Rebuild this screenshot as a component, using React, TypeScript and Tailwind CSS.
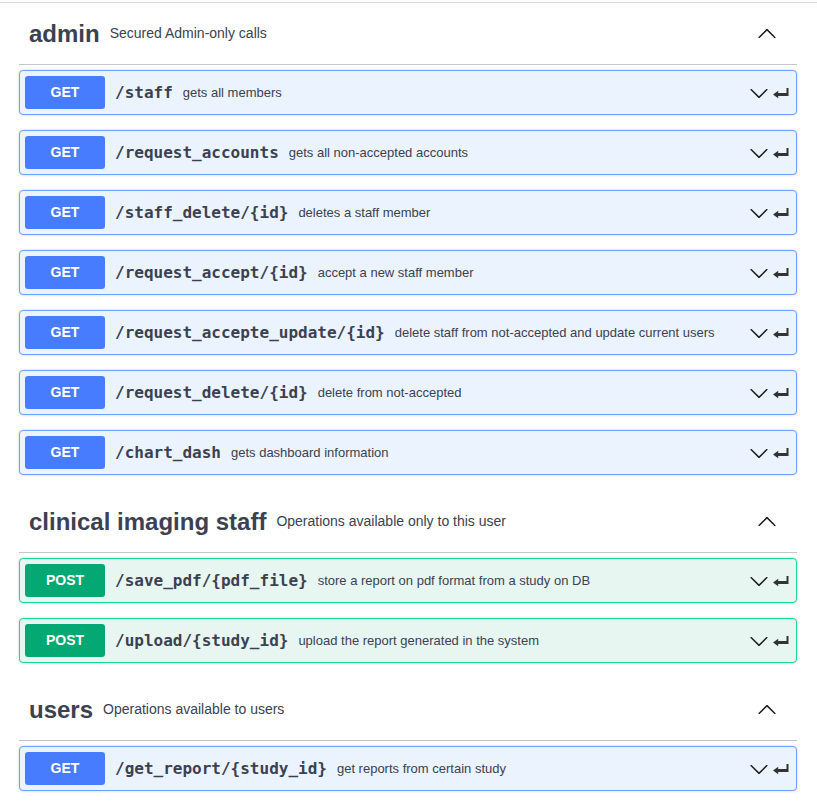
import React from 'react';

type Op = { method: 'GET' | 'POST'; path: string; summary: string };
type Tag = { name: string; description: string; ops: Op[] };

const TAGS: Tag[] = [
  {
    name: 'admin',
    description: 'Secured Admin-only calls',
    ops: [
      { method: 'GET', path: '/staff', summary: 'gets all members' },
      { method: 'GET', path: '/request_accounts', summary: 'gets all non-accepted accounts' },
      { method: 'GET', path: '/staff_delete/{id}', summary: 'deletes a staff member' },
      { method: 'GET', path: '/request_accept/{id}', summary: 'accept a new staff member' },
      {
        method: 'GET',
        path: '/request_accepte_update/{id}',
        summary: 'delete staff from not-accepted and update current users',
      },
      { method: 'GET', path: '/request_delete/{id}', summary: 'delete from not-accepted' },
      { method: 'GET', path: '/chart_dash', summary: 'gets dashboard information' },
    ],
  },
  {
    name: 'clinical imaging staff',
    description: 'Operations available only to this user',
    ops: [
      { method: 'POST', path: '/save_pdf/{pdf_file}', summary: 'store a report on pdf format from a study on DB' },
      { method: 'POST', path: '/upload/{study_id}', summary: 'upload the report generated in the system' },
    ],
  },
  {
    name: 'users',
    description: 'Operations available to users',
    ops: [{ method: 'GET', path: '/get_report/{study_id}', summary: 'get reports from certain study' }],
  },
];

const ARROW =
  'M17.418 6.109c.272-.268.709-.268.979 0s.271.701 0 .969l-7.908 7.83c-.27.268-.707.268-.979 0l-7.908-7.83c-.27-.268-.27-.701 0-.969.271-.268.709-.268.979 0L10 13.25l7.418-7.141z';

function Chevron({ up = false }: { up?: boolean }) {
  return (
    <svg
      viewBox="0 0 20 20"
      className={`h-[20px] w-[20px] shrink-0 ${up ? 'rotate-180' : ''}`}
      fill="#1b1b1b"
    >
      <path d={ARROW} />
    </svg>
  );
}

// return-style "jump to" arrow
function JumpTo() {
  return (
    <svg viewBox="0 0 20 20" className="h-[20px] w-[20px] shrink-0" fill="#333333">
      <path d="M15.5 5H17.5V13H7.2V15.3L2 11.5L7.2 7.7V10H15.5Z" />
    </svg>
  );
}

function OpRow({ op }: { op: Op }) {
  const get = op.method === 'GET';
  return (
    <div
      className={`mb-[15px] flex h-[45px] items-center rounded-[4px] border p-[5px] shadow-[0_0_3px_rgba(0,0,0,0.19)] ${
        get ? 'border-[#6fa0ff] bg-[#ebf3ff]' : 'border-[#14d894] bg-[#e8f6f1]'
      }`}
    >
      <span
        className={`flex h-[33px] w-[80px] shrink-0 items-center justify-center rounded-[3px] text-[14px] font-bold text-white ${
          get ? 'bg-[#477cff]' : 'bg-[#03a873]'
        }`}
      >
        {op.method}
      </span>
      <span className="px-[10px] font-['DejaVu_Sans_Mono',monospace] text-[16px] font-bold text-[#3b4151]">
        {op.path}
      </span>
      <span className="text-[13px] text-[#3b4151]">{op.summary}</span>
      <div className="flex-1" />
      <div className="flex items-center gap-[2px]">
        <Chevron />
        <JumpTo />
      </div>
    </div>
  );
}

function TagSection({ tag, first }: { tag: Tag; first: boolean }) {
  return (
    <div className={first ? '' : 'pt-px'}>
      <div className="mb-[5px] flex h-[62px] items-center border-b border-[#c4c6cb] pl-[10px] pr-[20px]">
        <h3 className="text-[24px] font-bold text-[#3b4151]">{tag.name}</h3>
        <span className="ml-[10px] text-[14px] text-[#3b4151]">{tag.description}</span>
        <div className="flex-1" />
        <Chevron up />
      </div>
      {tag.ops.map((op) => (
        <OpRow key={op.path} op={op} />
      ))}
    </div>
  );
}

export default function App() {
  return (
    <div className="min-h-screen bg-white font-['Liberation_Sans',Arial,sans-serif]">
      <div className="pt-[2px]">
        <div className="border-t border-[#d9d9d9]" />
      </div>
      <div className="pl-[19px] pr-[20px]">
        {TAGS.map((tag, i) => (
          <TagSection key={tag.name} tag={tag} first={i === 0} />
        ))}
      </div>
    </div>
  );
}
